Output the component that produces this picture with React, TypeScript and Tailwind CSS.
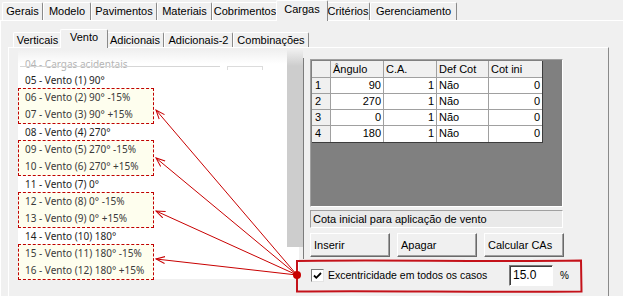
import React from 'react';

const topTabs = [
  { label: 'Gerais', w: 'w-[41px]' },
  { label: 'Modelo', w: 'w-[48px]' },
  { label: 'Pavimentos', w: 'w-[66px]' },
  { label: 'Materiais', w: 'w-[55px]' },
  { label: 'Cobrimentos', w: 'w-[66px]' },
  { label: 'Cargas', w: 'w-[52px]', active: true },
  { label: 'Critérios', w: 'w-[44px]' },
  { label: 'Gerenciamento', w: 'w-[87px]' },
];

const subTabs = [
  { label: 'Verticais', w: 'w-[49px]' },
  { label: 'Vento', w: 'w-[48px]', active: true },
  { label: 'Adicionais', w: 'w-[58px]' },
  { label: 'Adicionais-2', w: 'w-[69px]' },
  { label: 'Combinações', w: 'w-[76px]' },
];

// single entries are plain rows, pairs are the highlighted (eccentric) cases
const cases: (string | string[])[] = [
  '05 - Vento (1) 90°',
  ['06 - Vento (2) 90° -15%', '07 - Vento (3) 90° +15%'],
  '08 - Vento (4) 270°',
  ['09 - Vento (5) 270° -15%', '10 - Vento (6) 270° +15%'],
  '11 - Vento (7) 0°',
  ['12 - Vento (8) 0° -15%', '13 - Vento (9) 0° +15%'],
  '14 - Vento (10) 180°',
  ['15 - Vento (11) 180° -15%', '16 - Vento (12) 180° +15%'],
];

const rows = [
  ['1', '90', '1', 'Não', '0'],
  ['2', '270', '1', 'Não', '0'],
  ['3', '0', '1', 'Não', '0'],
  ['4', '180', '1', 'Não', '0'],
];

const arrowTargets = [110, 158, 211, 259];

export default function App() {
  return (
    <div className="relative w-[623px] h-[296px] overflow-hidden bg-[#f0f0f0] font-['Liberation_Sans',Arial,sans-serif] text-[11px] text-black">
      {/* Main tabs */}
      <div className="flex h-[20px] items-end pl-[2px]">
        {topTabs.map((t) =>
          t.active ? (
            <div
              key={t.label}
              className={`${t.w} relative z-10 -mx-[2px] -mb-px h-[21px] rounded-t-[2px] border-t border-l border-white border-r border-r-[#8a8a8a] bg-[#f0f0f0] text-center leading-[16px]`}
            >
              {t.label}
            </div>
          ) : (
            <div
              key={t.label}
              className={`${t.w} h-[18px] rounded-t-[2px] border-t border-l border-white border-r border-r-[#8a8a8a] text-center leading-[17px]`}
            >
              {t.label}
            </div>
          )
        )}
      </div>

      {/* Outer page */}
      <div className="h-[276px] border-t border-l border-white pl-[7px] pt-[8px]">
        {/* Sub tabs */}
        <div className="flex h-[18px] items-end pl-[5px]">
          {subTabs.map((t) =>
            t.active ? (
              <div
                key={t.label}
                className={`${t.w} relative z-10 -mx-[2px] -mb-px h-[19px] rounded-t-[2px] border-t border-l border-white border-r border-r-[#8a8a8a] bg-[#f0f0f0] text-center leading-[15px]`}
              >
                {t.label}
              </div>
            ) : (
              <div
                key={t.label}
                className={`${t.w} h-[15px] rounded-t-[2px] border-t border-l border-white border-r border-r-[#8a8a8a] text-center leading-[14px]`}
              >
                {t.label}
              </div>
            )
          )}
        </div>

        {/* Inner page */}
        <div className="flex h-[250px] w-[601px] items-start border-t border-l border-white border-r border-r-[#8a8a8a]">
          {/* Load case list */}
          <div className="relative ml-[9px] mt-[2px] h-[229px] w-[269px] bg-[linear-gradient(to_bottom,#f0f0f0,#ffffff_14px)] pt-[6px] font-['Noto_Sans',sans-serif] text-[10px]">
            <div className="absolute left-[2px] top-[16px] h-px w-[200px] bg-[#d6d6d6]" />
            <div className="absolute left-[209px] top-[16px] h-[4px] w-[36px] border-t border-x border-[#dcdcdc]" />
            <div className="h-[16px] pl-[7px] leading-[16px] text-[#b4b4b4]">04 - Cargas acidentais</div>
            {cases.map((c, i) =>
              typeof c === 'string' ? (
                <div key={i} className="h-[16px] pl-[7px] leading-[16px] text-[#1e1e1e]">
                  {c}
                </div>
              ) : (
                <div key={i} className="w-[136px] border border-dashed border-[#c00000] bg-[#fefeee] pl-[6px] text-[#3a3a3a]">
                  {c.map((s) => (
                    <div key={s} className="h-[17px] leading-[17px]">
                      {s}
                    </div>
                  ))}
                </div>
              )
            )}
          </div>

          {/* Strip left of the grid */}
          <div className="mt-[2px] flex w-[16px] flex-col">
            <div className="h-[197px] bg-[linear-gradient(to_bottom,#eeeeee,#cdcdcd_16px)]" />
            <div className="h-[32px] w-[12px] bg-white" />
          </div>
          <div className="mt-[10px] h-[201px] w-px bg-[#7c7c7c]" />

          {/* Right side */}
          <div className="ml-[6px] mt-[11px] flex flex-col">
            <div className="h-[148px] w-[253px] border-t border-l border-[#a0a0a0] border-b border-r border-b-white border-r-white bg-[#808080] p-px">
              <div className="grid w-[231px] grid-cols-[19px_53px_53px_52px_53px] border-r border-b border-[#3c3c3c] bg-white">
                {['', 'Ângulo', 'C.A.', 'Def Cot', 'Cot ini'].map((h, i) => (
                  <div
                    key={i}
                    className={`h-[17px] border-b border-[#a0a0a0] bg-[#f0f0f0] pl-[2px] leading-[16px] ${i < 4 ? 'border-r' : ''}`}
                  >
                    {h}
                  </div>
                ))}
                {rows.map((r, ri) =>
                  r.map((v, ci) => (
                    <div
                      key={`${ri}-${ci}`}
                      className={`h-[16px] border-[#a0a0a0] leading-[15px] ${ci < 4 ? 'border-r' : ''} ${ri < 3 ? 'border-b' : ''} ${
                        ci === 0 ? 'bg-[#f0f0f0] pl-[3px]' : ci === 3 ? 'pl-[2px]' : 'pr-[2px] text-right'
                      }`}
                    >
                      {v}
                    </div>
                  ))
                )}
              </div>
            </div>

            <div className="mt-[3px] h-[18px] w-[253px] border-t border-l border-[#a0a0a0] border-b border-r border-b-white border-r-white bg-[#e9e9e9] pl-[2px] leading-[16px]">
              Cota inicial para aplicação de vento
            </div>

            <div className="mt-[5px] flex gap-[7px]">
              {['Inserir', 'Apagar', 'Calcular CAs'].map((b) => (
                <button
                  key={b}
                  className="h-[24px] w-[80px] border-t border-l border-white border-b border-r border-b-[#6a6a6a] border-r-[#6a6a6a] bg-[#f0f0f0] pl-[3px] text-left leading-[22px] shadow-[inset_-1px_-1px_0_#a0a0a0]"
                >
                  {b}
                </button>
              ))}
            </div>

            <div className="mt-[8px] flex h-[21px] items-center">
              <div className="ml-px flex h-[13px] w-[13px] items-center justify-center border-t border-l border-[#7a7a7a] border-b border-r border-b-[#e4e4e4] border-r-[#e4e4e4] bg-white">
                <svg width="9" height="9" viewBox="0 0 9 9">
                  <path d="M1 4.5 L3.3 6.8 L8 2" fill="none" stroke="#000" strokeWidth="1.8" />
                </svg>
              </div>
              <span className="ml-[4px] w-[181px] text-[10.5px]">Excentricidade em todos os casos</span>
              <div className="h-[21px] w-[44px] border-t border-l border-[#7a7a7a] border-b border-r border-b-white border-r-white bg-white pl-[3px] text-[12px] leading-[18px] shadow-[inset_1px_1px_0_#3c3c3c]">
                15.0
              </div>
              <span className="ml-[7px] text-[10px]">%</span>
            </div>
          </div>
        </div>
      </div>

      {/* Annotation overlay */}
      <svg className="pointer-events-none absolute inset-0" width="623" height="296">
        <defs>
          <marker id="head" markerUnits="userSpaceOnUse" markerWidth="10" markerHeight="10" refX="9" refY="5" orient="auto">
            <path d="M0,1.5 L9,5 L0,8.5" fill="none" stroke="#c80000" strokeWidth="1" />
          </marker>
        </defs>
        {arrowTargets.map((y) => (
          <line key={y} x1="297" y1="275" x2="156" y2={y} stroke="#c80000" strokeWidth="1" markerEnd="url(#head)" />
        ))}
        <path
          d="M297 261 C380 259.5 480 262 581 260.5 L581.5 291.5 C480 292.5 380 290.5 297 291.5 Z"
          fill="none"
          stroke="#c4121a"
          strokeWidth="2"
        />
        <circle cx="297" cy="275" r="4" fill="#c80000" />
      </svg>
    </div>
  );
}
